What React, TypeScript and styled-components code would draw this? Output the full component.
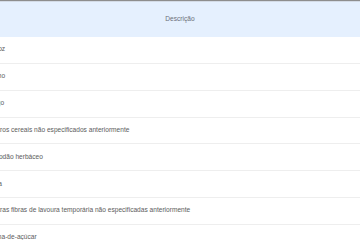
import React, { useLayoutEffect, useRef } from 'react'
import styled, { createGlobalStyle } from 'styled-components'

const GlobalStyle = createGlobalStyle`
  html, body {
    margin: 0;
    padding: 0;
    background: #ffffff;
    font-family: "Liberation Sans", Arial, sans-serif;
  }
`

// crop rows shown in the list, in table order
const crops: string[] = [
  'Arroz',
  'Milho',
  'Trigo',
  'Outros cereais não especificados anteriormente',
  'Algodão herbáceo',
  'Juta',
  'Outras fibras de lavoura temporária não especificadas anteriormente',
  'Cana-de-açúcar',
]

const Page = styled.div`
  width: 360px;
  height: 240px;
  overflow: hidden;
  border-top: 1px solid #8d8d8d;
  box-sizing: border-box;
`

const Scroller = styled.div`
  width: 360px;
  overflow-x: auto;
  scrollbar-width: none;
  &::-webkit-scrollbar {
    display: none;
  }
`

const Table = styled.div`
  width: 400px;
  display: flex;
  flex-direction: column;
`

const HeaderCell = styled.div`
  height: 36px;
  display: flex;
  align-items: center;
  justify-content: center;
  background: #e5f0fe;
  border-top: 1px solid #d3dbe6;
  box-sizing: border-box;
  color: #6b6f78;
  font-size: 6.6px;
  padding-bottom: 3px;
`

const Row = styled.div`
  height: 26.85px;
  box-sizing: border-box;
  display: flex;
  align-items: center;
  padding: 0 0 2px 9.4px;
  border-bottom: 1px solid #eeeeee;
  color: #5c5c5c;
  font-size: 6.6px;
  white-space: nowrap;
`

const App: React.FC = () => {
  const scrollRef = useRef<HTMLDivElement>(null)

  useLayoutEffect(() => {
    if (scrollRef.current) scrollRef.current.scrollLeft = 20
  }, [])

  return (
    <Page>
      <GlobalStyle />
      <Scroller ref={scrollRef}>
        <Table>
          <HeaderCell>Descrição</HeaderCell>
          {crops.map((c) => (
            <Row key={c}>{c}</Row>
          ))}
        </Table>
      </Scroller>
    </Page>
  )
}

export default App
